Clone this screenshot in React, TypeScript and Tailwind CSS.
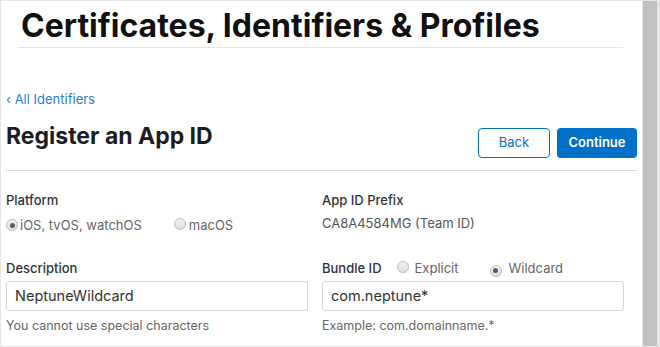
import React from 'react';

function Radio({ checked }: { checked?: boolean }) {
  return (
    <span className="inline-flex h-[12px] w-[12px] items-center justify-center rounded-full border border-[#bdbdbd] bg-gradient-to-b from-[#f2f2f2] to-[#dedede]">
      {checked && <span className="h-[5px] w-[5px] rounded-full bg-[#5a5a5a]" />}
    </span>
  );
}

export default function App() {
  return (
    <div className="flex h-[347px] w-[660px] overflow-hidden bg-[#e6e6e6] pt-px pb-px pl-px" style={{ fontFamily: 'Inter, "Liberation Sans", sans-serif' }}>
      <div className="flex-1 bg-white">
        <div className="ml-[17px] w-[605px] border-b border-[#e5e5e5] pb-[3px] pt-[7px]">
          <h1 className="pl-[3px] text-[32px] font-bold leading-[36px] text-[#111]">
            Certificates, Identifiers &amp; Profiles
          </h1>
        </div>

        <div className="pl-[5px] pr-[5px]">
          <a className="mt-[43px] block text-[13px] leading-[16px] text-[#2c7fd3]">‹ All Identifiers</a>

          <div className="mt-[14px] flex items-start justify-between border-b border-[#dcdcdc] pb-[12px]">
            <h2 className="text-[23px] font-bold leading-[30px] text-[#1d1d1f]">Register an App ID</h2>
            <div className="mt-[7px] flex gap-[7px]">
              <button className="h-[30px] w-[72px] rounded-[4px] border border-[#0070c9] bg-white text-[13px] text-[#0070c9]">Back</button>
              <button className="h-[30px] w-[80px] rounded-[4px] bg-[#0070c9] text-[13px] font-semibold text-white">Continue</button>
            </div>
          </div>

          <div className="mt-[20px] grid grid-cols-[316px_1fr] text-[13px]">
            <div>
              <div className="font-medium leading-[18px] text-[#333]">Platform</div>
              <div className="mt-[8px] flex items-center leading-[16px] text-[#666]">
                <Radio checked />
                <span className="ml-[2px]">iOS, tvOS, watchOS</span>
                <span className="ml-[32px]"><Radio /></span>
                <span className="ml-[3px]">macOS</span>
              </div>
            </div>
            <div>
              <div className="font-medium leading-[18px] text-[#333]">App ID Prefix</div>
              <div className="mt-[6px] leading-[16px] text-[#555]">CA8A4584MG (Team ID)</div>
            </div>

            <div className="mt-[26px] pr-[8px]">
              <div className="font-medium leading-[18px] text-[#333]">Description</div>
              <div className="mt-[4px] flex h-[30px] w-[302px] items-center rounded-[3px] border border-[#d6d6d6] px-[8px] text-[14.5px] text-[#333]">NeptuneWildcard</div>
              <div className="mt-[7px] text-[12.5px] leading-[16px] text-[#666]">You cannot use special characters</div>
            </div>
            <div className="mt-[26px]">
              <div className="flex items-center leading-[18px]">
                <span className="font-medium text-[#333]">Bundle ID</span>
                <span className="ml-[15px]"><Radio /></span>
                <span className="ml-[6px] text-[#666]">Explicit</span>
                <span className="ml-[31px]"><Radio checked /></span>
                <span className="ml-[7px] text-[#666]">Wildcard</span>
              </div>
              <div className="mt-[4px] flex h-[30px] w-[302px] items-center rounded-[3px] border border-[#d6d6d6] px-[8px] text-[14.5px] text-[#333]">com.neptune*</div>
              <div className="mt-[7px] text-[12.5px] leading-[16px] text-[#666]">Example: com.domainname.*</div>
            </div>
          </div>
        </div>
      </div>
      <div className="w-[1px] bg-[#e6e6e6]" />
      <div className="w-[14px] bg-[#c1c1c1]" />
      <div className="w-[3px] bg-[#e6e6e6]" />
    </div>
  );
}
